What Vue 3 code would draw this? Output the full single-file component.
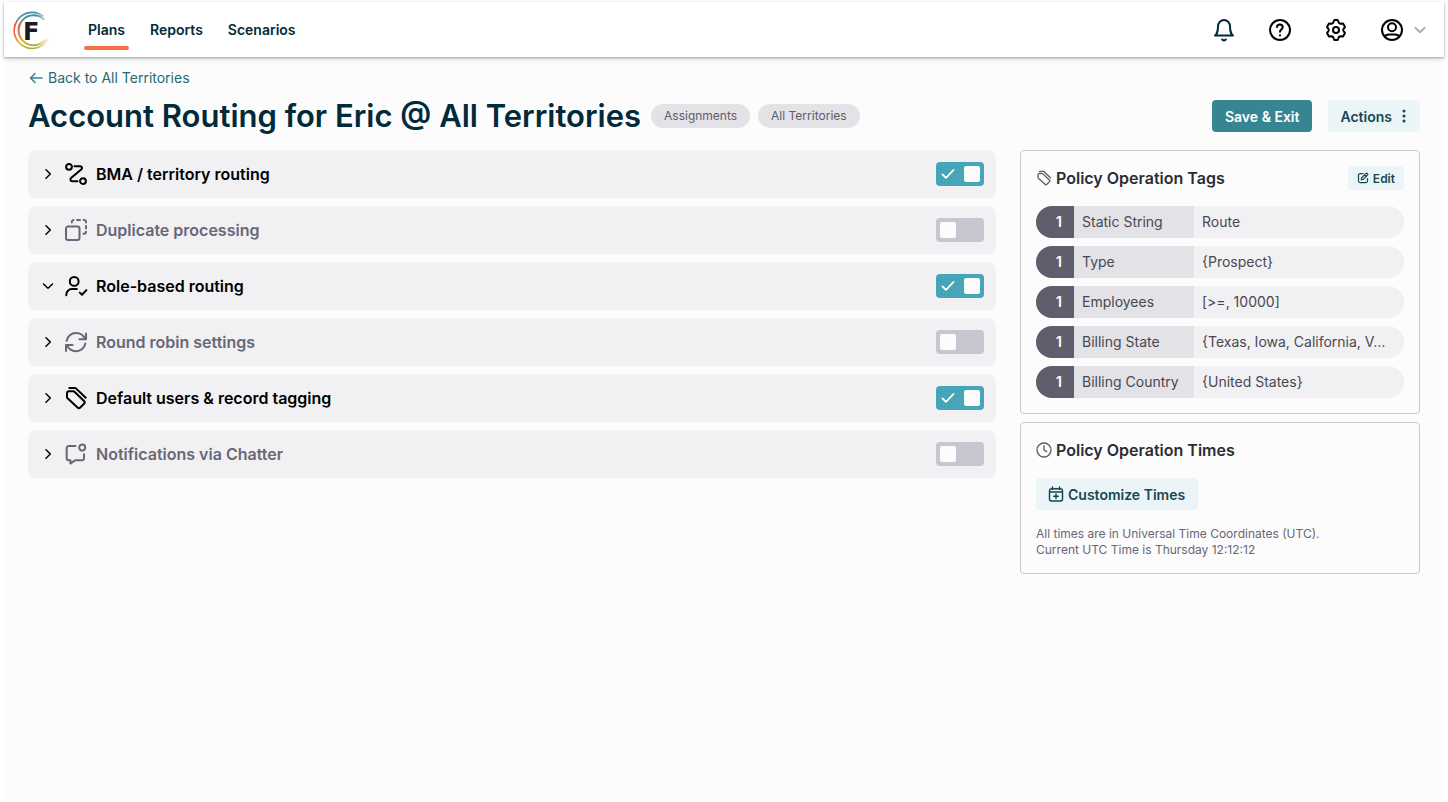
<script setup>
import { ref } from 'vue'

const navItems = ['Plans', 'Reports', 'Scenarios']
const current = 'Plans'

const sections = ref([
  { id: 'routing', label: 'BMA / territory routing', on: true, open: false },
  { id: 'duplicate', label: 'Duplicate processing', on: false, open: false },
  { id: 'role', label: 'Role-based routing', on: true, open: true },
  { id: 'robin', label: 'Round robin settings', on: false, open: false },
  { id: 'tags', label: 'Default users & record tagging', on: true, open: false },
  { id: 'chatter', label: 'Notifications via Chatter', on: false, open: false }
])

const icons = {
  routing: [
    'M5 1.9a2.9 2.9 0 1 0 0 5.8 2.9 2.9 0 0 0 0-5.8z',
    'M19 16.2a2.9 2.9 0 1 0 0 5.8 2.9 2.9 0 0 0 0-5.8z',
    'M10.5 4.3h5.6c2 0 2.6 1.9 1.1 3.2L7.3 15.8c-1.6 1.4-1 3.5 1 3.5h5.2'
  ],
  duplicate: [
    'M4 8.6h9.5a2 2 0 0 1 2 2v9.5a2 2 0 0 1-2 2H4a2 2 0 0 1-2-2v-9.5a2 2 0 0 1 2-2z',
    'M7.8 4.6V4a2 2 0 0 1 1.6-1.9',
    'M13 2h3',
    'M19.6 2H20a2 2 0 0 1 2 2v.6',
    'M22 8v2.6',
    'M22 13.8v.4a2 2 0 0 1-2 1.6h-.6'
  ],
  role: [
    'M10.2 3a4.4 4.4 0 1 0 0 8.8 4.4 4.4 0 0 0 0-8.8z',
    'M2.3 21.2v-.6a5.5 5.5 0 0 1 5.5-5.5h5',
    'M15.8 18.6l2.2 2.1 4.4-4.6'
  ],
  robin: [
    'M22 3.4v5.9h-6.6',
    'M2.6 10.8C3.4 6.2 7.3 3 12 3c4.2 0 7.6 2.3 9 6.1',
    'M2 21v-5.9h6.6',
    'M21.4 13.4c-.8 4.6-4.7 7.8-9.4 7.8-4.2 0-7.6-2.3-9-6'
  ],
  tags: [
    'M5.3 2h5.5a2 2 0 0 1 1.4.6L21.7 11.7',
    'M3 7.2a2 2 0 0 1 2-2h4.1a2 2 0 0 1 1.4.6l9.5 9.2a2 2 0 0 1 0 2.8l-3.7 3.7a2 2 0 0 1-2.8 0L3.6 12.3A2 2 0 0 1 3 10.9z'
  ],
  chatter: [
    'M11.5 4H4.7a2 2 0 0 0-2 2v10.2a2 2 0 0 0 2 2h1.7v3.4l4.7-3.4h6.9a2 2 0 0 0 2-2v-3.9',
    'M18.2 2.6a3 3 0 1 0 0 6 3 3 0 0 0 0-6z'
  ]
}

const tags = [
  { count: 1, name: 'Static String', value: 'Route' },
  { count: 1, name: 'Type', value: '{Prospect}' },
  { count: 1, name: 'Employees', value: '[>=, 10000]' },
  { count: 1, name: 'Billing State', value: '{Texas, Iowa, California, V…' },
  { count: 1, name: 'Billing Country', value: '{United States}' }
]
</script>

<template>
  <div class="app">
    <header class="topbar">
      <a href="#" class="logo" aria-label="Home">
        <svg width="40" height="40" viewBox="0 0 40 40">
          <defs>
            <linearGradient id="ring" x1="0" y1="0" x2="0" y2="1">
              <stop offset="0" stop-color="#3f8fa3" />
              <stop offset=".16" stop-color="#5c98a0" />
              <stop offset=".32" stop-color="#e4573a" />
              <stop offset=".66" stop-color="#ee7037" />
              <stop offset=".86" stop-color="#e6b62c" />
              <stop offset="1" stop-color="#a0b63f" />
            </linearGradient>
            <linearGradient id="ringFade" x1="0" y1="0" x2="1" y2="0">
              <stop offset=".6" stop-color="#fff" />
              <stop offset=".95" stop-color="#fff" stop-opacity="0" />
            </linearGradient>
            <mask id="ringMask"><rect width="40" height="40" fill="url(#ringFade)" /></mask>
          </defs>
          <g fill="none" stroke="url(#ring)" mask="url(#ringMask)">
            <path d="M31 6A18 18 0 1 0 36 29" stroke-width="1.6" />
            <path d="M32 9.500A15 15 0 1 0 33 30" stroke-width="2" />
          </g>
          <text x="11" y="30" class="logo-letter">F</text>
        </svg>
      </a>
      <nav class="nav">
        <a v-for="item in navItems" :key="item" href="#" :class="{ active: item === current }">{{ item }}</a>
      </nav>
      <div class="tools">
        <button class="tool bell" aria-label="Notifications">
          <svg class="icon" viewBox="0 0 24 24">
            <path d="M18 8.4c0-1.7-.6-3.3-1.75-4.5S13.6 2 12 2s-3.1.7-4.25 1.9S6 6.7 6 8.4C6 15.9 3 17.6 3 17.6h18s-3-1.7-3-9.2z" />
            <path d="M13.8 21.5a2.6 2.6 0 0 1-3.6 0" />
          </svg>
        </button>
        <button class="tool" aria-label="Help">
          <svg class="icon" viewBox="0 0 24 24">
            <circle cx="12" cy="12" r="10" />
            <path d="M9 9c0-3.5 5.7-3.5 5.7 0 0 2.5-2.7 2.3-2.7 4.7M12 17.3v.1" />
          </svg>
        </button>
        <button class="tool" aria-label="Settings">
          <svg class="icon" viewBox="0 0 24 24">
            <circle cx="12" cy="12" r="3" />
            <path d="M10.300 2h3.400l1.100 2.800q.5.900 1.600.9l2.600-.3 2 3.500-1.500 2.100q-.6 1 0 2l1.500 2.100-2 3.500-2.600-.3q-1.100 0-1.600.9L13.700 22h-3.400l-1.100-2.800q-.5-.9-1.600-.9l-2.600.3-2-3.500 1.500-2.100q.6-1 0-2L3 8.900l2-3.500 2.600.3q1.100 0 1.600-.9z" />
          </svg>
        </button>
        <button class="tool account" aria-label="Account">
          <svg class="icon" viewBox="0 0 24 24">
            <circle cx="12" cy="12" r="10" />
            <circle cx="12" cy="9.2" r="4" />
            <path d="M4.800 18.600c.8-1.700 2.300-2.200 4.200-2.200h6c1.900 0 3.400.5 4.200 2.200" />
          </svg>
          <svg class="caret" viewBox="0 0 12 12"><path d="M1.500 4L6 8.300 10.500 4" /></svg>
        </button>
      </div>
    </header>

    <main class="page">
      <a href="#" class="back">
        <svg class="arrow" viewBox="0 0 16 16"><path d="M14 8H2.500M7 3.500L2.500 8 7 12.500" /></svg>
        Back to All Territories
      </a>

      <div class="heading">
        <h1>Account Routing for Eric @ All Territories</h1>
        <span class="chip">Assignments</span>
        <span class="chip">All Territories</span>
        <div class="heading-actions">
          <button class="btn primary">Save &amp; Exit</button>
          <button class="btn soft actions">
            Actions
            <svg class="dots" viewBox="0 0 16 16">
              <circle cx="8" cy="3" r="1.5" /><circle cx="8" cy="8" r="1.5" /><circle cx="8" cy="13" r="1.5" />
            </svg>
          </button>
        </div>
      </div>

      <div class="columns">
        <div class="sections">
          <section v-for="s in sections" :key="s.id" class="section" :class="{ off: !s.on }">
            <button class="expander" :aria-expanded="s.open" @click="s.open = !s.open">
              <svg class="chevron" viewBox="0 0 16 16">
                <path :d="s.open ? 'M3.500 6L8 10.300 12.500 6' : 'M6 3.700L10.300 8 6 12.300'" />
              </svg>
              <svg class="icon" viewBox="0 0 24 24">
                <path v-for="d in icons[s.id]" :key="d" :d="d" />
              </svg>
              <span>{{ s.label }}</span>
            </button>
            <label class="toggle">
              <input v-model="s.on" type="checkbox" :aria-label="s.label" />
              <svg v-if="s.on" class="tick" viewBox="0 0 16 16"><path d="M2.500 8.500l3.500 3.300L13.500 4" /></svg>
              <span class="knob"></span>
            </label>
          </section>
        </div>

        <aside class="side">
          <section class="card">
            <div class="card-head">
              <svg class="icon small" viewBox="0 0 24 24">
                <path v-for="d in icons.tags" :key="d" :d="d" />
              </svg>
              <h2>Policy Operation Tags</h2>
              <button class="btn soft edit">
                <svg class="edit-icon" viewBox="0 0 24 24">
                  <path d="M12 3H6a3 3 0 0 0-3 3v12a3 3 0 0 0 3 3h12a3 3 0 0 0 3-3v-5" />
                  <path d="M8.500 15.500l.8-4 8.300-8.300c1-1 2.300-.7 3.100.1s1 2 .1 3l-8.300 8.400zM15.500 6l3 3" />
                </svg>
                Edit
              </button>
            </div>
            <ul class="tag-list">
              <li v-for="t in tags" :key="t.name">
                <span class="count">{{ t.count }}</span>
                <span class="name">{{ t.name }}</span>
                <span class="value">{{ t.value }}</span>
              </li>
            </ul>
          </section>

          <section class="card times">
            <div class="card-head">
              <svg class="icon small" viewBox="0 0 24 24">
                <circle cx="12" cy="12" r="10.5" />
                <path d="M12 5.500V12l4 2.500" />
              </svg>
              <h2>Policy Operation Times</h2>
            </div>
            <button class="btn soft customize">
              <svg class="calendar" viewBox="0 0 16 16">
                <path d="M3.500 2.700h9a2 2 0 0 1 2 2v8.300a2 2 0 0 1-2 2h-9a2 2 0 0 1-2-2V4.700a2 2 0 0 1 2-2zM1.500 6h13M4.500 1v2.500M11.500 1v2.500M8 8v4.600M5.700 10.300h4.600" />
              </svg>
              Customize Times
            </button>
            <p>All times are in Universal Time Coordinates (UTC).<br />Current UTC Time is Thursday 12:12:12</p>
          </section>
        </aside>
      </div>
    </main>
  </div>
</template>

<style>
body {
  background: #fff;
}
</style>

<style scoped>
.app,
.app * {
  box-sizing: border-box;
}
.app {
  margin: 2px 4px 0;
  min-height: calc(100vh - 2px);
  background: #fcfcfc;
  font-family: Inter, "Liberation Sans", sans-serif;
  font-size: 14px;
  color: #494852;
}
button {
  font: inherit;
  color: inherit;
  border: 0;
  padding: 0;
  background: none;
  cursor: pointer;
}
a {
  text-decoration: none;
}
svg {
  display: block;
  flex: none;
  fill: none;
  stroke: currentColor;
  stroke-linecap: round;
  stroke-linejoin: round;
}
h1,
h2,
p,
ul {
  margin: 0;
  padding: 0;
}
.topbar {
  display: flex;
  align-items: center;
  height: 55px;
  padding: 0 18px 0 8px;
  background: #fff;
  box-shadow: 0 1px 2px rgba(20, 25, 40, 0.35), 0 2px 6px rgba(20, 25, 40, 0.12);
}
.logo svg {
  stroke: none;
}
.logo-letter {
  font: bold 24px "DejaVu Sans", sans-serif;
  fill: #1b1a1f;
}
.nav {
  display: flex;
  gap: 17px;
  margin-left: 32px;
}
.nav a {
  position: relative;
  padding: 8px 4px;
  line-height: 24px;
  font-weight: 600;
  color: #012a3a;
}
.nav a.active::after {
  content: "";
  position: absolute;
  left: 0;
  right: 0;
  bottom: 0;
  height: 4px;
  border-radius: 2px;
  background: #f96f43;
}
.tools {
  display: flex;
  align-items: center;
  gap: 32px;
  margin-left: auto;
}
.tool {
  color: #000;
}
.bell {
  color: #012a3a;
}
.account {
  display: flex;
  align-items: center;
  gap: 10px;
}
.icon {
  width: 24px;
  height: 24px;
  stroke-width: 2;
}
.caret {
  width: 12px;
  height: 12px;
  color: #acabb8;
  stroke-width: 2;
}
.page {
  padding: 12px 24px;
}
.back {
  display: flex;
  align-items: center;
  gap: 4px;
  width: fit-content;
  line-height: 18px;
  color: #256a73;
}
.arrow {
  width: 16px;
  height: 16px;
  stroke-width: 1.5;
  color: #378591;
}
.heading {
  display: flex;
  align-items: center;
  gap: 8px;
  margin-top: 13px;
}
h1 {
  margin-right: 2px;
  font-size: 31px;
  line-height: 32px;
  font-weight: 600;
  color: #012a3a;
}
.chip {
  padding: 0 13px;
  border-radius: 12px;
  background: #e3e2e7;
  font-size: 12px;
  line-height: 24px;
  color: #5d5c6a;
}
.heading-actions {
  display: flex;
  gap: 16px;
  margin-left: auto;
}
.btn {
  display: inline-flex;
  align-items: center;
  height: 32px;
  padding: 0 13px;
  border-radius: 4px;
  font-weight: 600;
}
.primary {
  background: #378591;
  color: #fff;
}
.soft {
  background: #ebf5f8;
  color: #174750;
}
.actions {
  gap: 4px;
  padding: 0 8px 0 12px;
}
.dots {
  width: 16px;
  height: 16px;
  fill: currentColor;
  stroke: none;
}
.columns {
  display: grid;
  grid-template-columns: minmax(0, 1fr) 400px;
  gap: 24px;
  align-items: start;
  margin-top: 18px;
}
.sections {
  display: grid;
  gap: 8px;
}
.section {
  display: flex;
  align-items: center;
  height: 48px;
  padding: 0 12px;
  border-radius: 8px;
  background: #f1f0f3;
  color: #000;
}
.expander {
  flex: 1;
  display: flex;
  align-items: center;
  gap: 8px;
  height: 48px;
  font-size: 16px;
  font-weight: 600;
  text-align: left;
}
.chevron {
  width: 16px;
  height: 16px;
  color: #000;
  stroke-width: 1.5;
}
.off .expander {
  color: #686777;
}
.toggle {
  position: relative;
  display: flex;
  align-items: center;
  justify-content: flex-start;
  width: 48px;
  height: 24px;
  padding: 4px;
  border-radius: 4px;
  background: #46a5b9;
  cursor: pointer;
}
.off .toggle {
  background: #c8c7d1;
}
.toggle input {
  appearance: none;
  position: absolute;
  inset: 0;
  margin: 0;
  cursor: pointer;
}
.tick {
  width: 16px;
  height: 16px;
  margin-right: 8px;
  color: #fff;
  stroke-width: 1.8;
}
.knob {
  width: 16px;
  height: 16px;
  border-radius: 2px;
  background: #fcfcfc;
}
.side {
  display: grid;
  gap: 8px;
}
.card {
  padding: 15px;
  border: 1px solid #c8c7d1;
  border-radius: 4px;
}
.card-head {
  display: flex;
  align-items: center;
  gap: 4px;
  height: 24px;
}
.small {
  width: 16px;
  height: 16px;
  color: #5d5c6a;
}
h2 {
  font-size: 16px;
  line-height: 24px;
  font-weight: 600;
  color: #2d2c33;
}
.edit {
  gap: 4px;
  height: 24px;
  margin-left: auto;
  padding: 0 9px;
  font-size: 12px;
}
.edit-icon {
  width: 12px;
  height: 12px;
  stroke-width: 2.5;
}
.tag-list {
  display: grid;
  gap: 8px;
  margin-top: 16px;
  list-style: none;
}
.tag-list li {
  display: grid;
  grid-template-columns: 38px 120px minmax(0, 1fr);
  border-radius: 16px;
  overflow: hidden;
  line-height: 32px;
  background: #f1f0f3;
}
.count {
  padding-right: 12px;
  text-align: right;
  font-weight: 600;
  color: #fff;
  background: #5f5e6c;
}
.name {
  padding-left: 8px;
  white-space: nowrap;
  background: #e3e2e7;
}
.value {
  padding: 0 16px 0 8px;
  white-space: nowrap;
  overflow: hidden;
  text-overflow: ellipsis;
}
.customize {
  gap: 4px;
  margin-top: 16px;
  padding: 0 13px 0 12px;
}
.calendar {
  width: 16px;
  height: 16px;
  stroke-width: 1.5;
}
.times p {
  margin-top: 16px;
  font-size: 12px;
  line-height: 16px;
  color: #686777;
}
</style>
